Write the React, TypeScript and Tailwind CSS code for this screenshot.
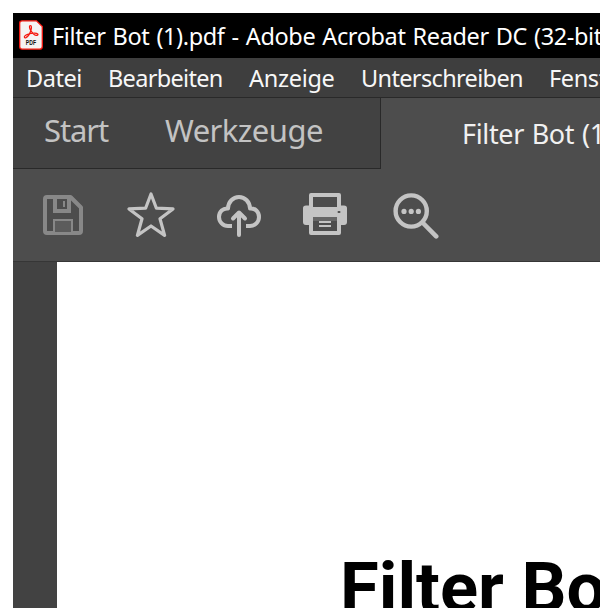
const ui = "font-['Noto_Sans','Open_Sans',sans-serif] whitespace-nowrap";

function PdfIcon() {
  return (
    <svg width="24" height="30" viewBox="0 0 24 30" className="shrink-0">
      <path d="M3 .8H17.5L23.3 6.5V26.5Q23.3 29.2 20.7 29.2H3Q.7 29.2 .7 26.8V3Q.7.8 3 .8Z" fill="#f5f3f3" stroke="#f5180f" strokeWidth="1.3" />
      <path d="M11.5 5.5C9.8 5.5 10.4 8.4 12.2 11.2C13.7 13.6 16.4 15.7 18.1 15.3C20 14.8 18.6 13 15.6 13C12.2 13 8.3 14 6.3 15.5C4.6 16.7 5.4 18.4 7 17.6C9 16.5 11.3 12.7 12 10C12.6 7.8 12.7 5.5 11.5 5.5Z" fill="none" stroke="#f5180f" strokeWidth="1.25" />
      <text x="6.8" y="25.2" fontSize="7" fontWeight="700" textLength="10.2" lengthAdjust="spacingAndGlyphs" fontFamily="Liberation Sans, sans-serif" fill="#111">PDF</text>
    </svg>
  );
}

function SaveIcon() {
  return (
    <svg width="40" height="40" viewBox="0 0 40 40">
      <path d="M2 4Q2 2 4 2H27.5L38 12.5V36Q38 38 36 38H4Q2 38 2 36Z" fill="none" stroke="#888" strokeWidth="4" strokeLinejoin="round" />
      <path d="M12 3V16H26V3" fill="none" stroke="#888" strokeWidth="4" />
      <path d="M20 6h2v6h-2z" fill="#888" />
      <path d="M11 37V25H29V37" fill="#5c5c5c" stroke="#888" strokeWidth="2" />
    </svg>
  );
}

function StarIcon() {
  return (
    <svg width="48" height="47" viewBox="0 0 48 47">
      <path d="M24 3L29.4 17.2L46 17.9L33 27.8L37.6 44.4L24 35L10.4 44.4L15 27.8L2 17.9L18.6 17.2Z" fill="none" stroke="#c4c4c4" strokeWidth="3.2" strokeLinejoin="round" />
    </svg>
  );
}

function CloudIcon() {
  return (
    <svg width="44" height="42" viewBox="0 0 44 42" fill="none" stroke="#c4c4c4" strokeWidth="4">
      <path d="M15 31H11C6 31 2 27 2 22C2 16.5 6 13 11 13.5C11.2 6.8 16 2 22 2C28 2 32.8 6.8 33 13.5C38 13 42 16.5 42 22C42 27 38 31 33 31H29" strokeLinejoin="round" />
      <path d="M22 18V40M16 23.5L22 17.5L28 23.5" strokeLinecap="round" strokeLinejoin="round" />
    </svg>
  );
}

function PrintIcon() {
  return (
    <svg width="44" height="42" viewBox="0 0 44 42">
      <path d="M8 14V2H36V14" fill="none" stroke="#c4c4c4" strokeWidth="4" strokeLinejoin="round" />
      <path d="M3 12.5H8V14H36V12.5H41Q44 12.5 44 15V29Q44 32 41 32H3Q0 32 0 29V15Q0 12.5 3 12.5Z" fill="#c4c4c4" />
      <rect x="34.5" y="18" width="3" height="2" rx="1" fill="#4d4d4d" />
      <path d="M10 24H34V38H10Z" fill="#4d4d4d" />
      <path d="M8 24V40H36V24" fill="none" stroke="#c4c4c4" strokeWidth="4" strokeLinejoin="round" />
      <path d="M10 24H34V28H10Z" fill="#666" />
      <path d="M16 29H28M16 33H28" stroke="#c4c4c4" strokeWidth="2" />
    </svg>
  );
}

function SearchIcon() {
  return (
    <svg width="46" height="46" viewBox="0 0 46 46">
      <circle cx="18.2" cy="18" r="15.6" fill="none" stroke="#c4c4c4" strokeWidth="4.4" />
      <path d="M30 30L43.2 43.4" stroke="#c4c4c4" strokeWidth="4.6" strokeLinecap="round" />
      <g fill="#c4c4c4">
        <circle cx="11" cy="18.4" r="2.6" />
        <circle cx="18.2" cy="18.4" r="2.6" />
        <circle cx="25.4" cy="18.4" r="2.6" />
      </g>
    </svg>
  );
}

export default function App() {
  return (
    <div className="h-[608px] w-[600px] overflow-hidden bg-white pt-[13px] pl-[13px]">
      <div className="flex h-[595px] w-[587px] flex-col overflow-hidden">
        <header className="flex h-[45px] shrink-0 items-center overflow-hidden bg-black pl-[6px] text-white">
          <div className="-mt-[1px]"><PdfIcon /></div>
          <span className={`${ui} ml-[9px] pt-[2px] text-[23.5px] leading-[45px] tracking-[-0.38px] [word-spacing:1.3px]`}>Filter Bot (1).pdf - Adobe Acrobat Reader DC (32-bit</span>
        </header>
        <nav className={`${ui} flex h-[40px] shrink-0 border-b border-[#292929] bg-[#3e3e3e] pl-[13px] text-[23.5px] leading-[41px] text-[#f7f7f7]`}>
          <span className="w-[82px] shrink-0 tracking-[-0.45px]">Datei</span>
          <span className="w-[141px] shrink-0 tracking-[-0.68px]">Bearbeiten</span>
          <span className="w-[112px] shrink-0 tracking-[-0.3px]">Anzeige</span>
          <span className="w-[188px] shrink-0 tracking-[-0.65px]">Unterschreiben</span>
          <span className="tracking-[-0.4px]">Fenst</span>
        </nav>
        <div className={`${ui} flex h-[71px] shrink-0 bg-[#4d4d4d]`}>
          <div className="flex w-[368px] shrink-0 border-r border-b border-[#292929] bg-[#424242] pl-[31px] text-[31px] leading-[65px] text-[#c3c3c3]">
            <span className="w-[121px] shrink-0 tracking-[-1.1px]">Start</span>
            <span className="tracking-[-0.55px]">Werkzeuge</span>
          </div>
          <div className="pl-[81px] text-[27px] leading-[72px] tracking-[-0.35px] text-[#f1f1f1] [word-spacing:1px]">Filter Bot (1</div>
        </div>
        <div className="flex h-[93px] shrink-0 items-start border-b border-[#363636] bg-[#4d4d4d] pl-[30px]">
          <div className="mt-[26px] w-[84px]"><SaveIcon /></div>
          <div className="mt-[22px] w-[90px]"><StarIcon /></div>
          <div className="mt-[26px] w-[86px]"><CloudIcon /></div>
          <div className="mt-[24px] w-[90px]"><PrintIcon /></div>
          <div className="mt-[24px]"><SearchIcon /></div>
        </div>
        <main className="flex min-h-0 flex-1">
          <aside className="w-[44px] shrink-0 bg-[#424242]" />
          <section className="h-[346px] overflow-hidden bg-white pt-[284px] pl-[283px]">
            <h1 className="font-[Roboto,sans-serif] text-[70.6px] leading-[84px] font-bold whitespace-nowrap text-black">Filter Bot</h1>
          </section>
        </main>
      </div>
    </div>
  );
}
